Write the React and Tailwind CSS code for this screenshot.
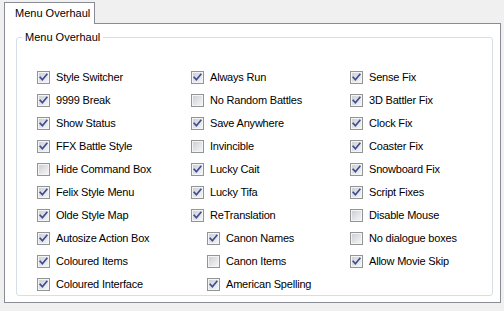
const COLUMNS = [
  {
    width: 'w-[154px]',
    items: [
      { label: 'Style Switcher', checked: true },
      { label: '9999 Break', checked: true },
      { label: 'Show Status', checked: true },
      { label: 'FFX Battle Style', checked: true },
      { label: 'Hide Command Box', checked: false },
      { label: 'Felix Style Menu', checked: true },
      { label: 'Olde Style Map', checked: true },
      { label: 'Autosize Action Box', checked: true },
      { label: 'Coloured Items', checked: true },
      { label: 'Coloured Interface', checked: true },
    ],
  },
  {
    width: 'w-[159px]',
    items: [
      { label: 'Always Run', checked: true },
      { label: 'No Random Battles', checked: false },
      { label: 'Save Anywhere', checked: true },
      { label: 'Invincible', checked: false },
      { label: 'Lucky Cait', checked: true },
      { label: 'Lucky Tifa', checked: true },
      { label: 'ReTranslation', checked: true },
      { label: 'Canon Names', checked: true, sub: true },
      { label: 'Canon Items', checked: false, sub: true },
      { label: 'American Spelling', checked: true, sub: true },
    ],
  },
  {
    width: 'flex-1',
    items: [
      { label: 'Sense Fix', checked: true },
      { label: '3D Battler Fix', checked: true },
      { label: 'Clock Fix', checked: true },
      { label: 'Coaster Fix', checked: true },
      { label: 'Snowboard Fix', checked: true },
      { label: 'Script Fixes', checked: true },
      { label: 'Disable Mouse', checked: false },
      { label: 'No dialogue boxes', checked: false },
      { label: 'Allow Movie Skip', checked: true },
    ],
  },
];

function CheckBox({ checked }) {
  return (
    <svg width="13" height="13" viewBox="0 0 13 13" className="shrink-0">
      <defs>
        <linearGradient id="cbfill" x1="0" y1="0" x2="1" y2="1">
          <stop offset="0" stopColor="#cdd0d5" />
          <stop offset="1" stopColor="#f4f4f5" />
        </linearGradient>
      </defs>
      <rect x="0.5" y="0.5" width="12" height="12" fill="#f4f4f4" stroke="#939494" />
      <rect x="2" y="2" width="9" height="9" fill="url(#cbfill)" />
      {checked && (
        <polyline
          points="3.2,6.4 5.4,8.8 9.8,3.4"
          fill="none"
          stroke="#404c92"
          strokeWidth="1.7"
          strokeLinecap="square"
        />
      )}
    </svg>
  );
}

function Option({ label, checked, sub }) {
  return (
    <div className={`flex h-[23px] items-center gap-[6px] pt-px ${sub ? 'pl-[16px]' : ''}`}>
      <CheckBox checked={checked} />
      <span className="whitespace-nowrap leading-[13px] tracking-[-0.2px]">{label}</span>
    </div>
  );
}

export default function App() {
  return (
    <div className="h-[311px] w-[504px] overflow-hidden bg-[#f0f0f0] pl-[4px] pt-[2px] font-['Liberation_Sans',Arial,sans-serif] text-[11px] text-black">
      {/* Tab header */}
      <div className="relative z-10 flex h-[22px] w-[91px] items-center border border-b-0 border-[#898c95] bg-white pl-[10px] pb-[1px]">
        Menu Overhaul
      </div>

      {/* Tab page */}
      <div className="-mt-px h-[280px] w-[497px] border border-[#898c95] bg-white">
        <div className="relative ml-[11px] mt-[13px] h-[259px] w-[477px] rounded-[3px] border border-[#d5dfe5]">
          <span className="absolute -top-[7px] left-[5px] bg-white px-[3px] leading-[13px]">Menu Overhaul</span>

          <div className="flex pl-[20px] pt-[27px]">
            {COLUMNS.map((col, i) => (
              <div key={i} className={`flex flex-col ${col.width}`}>
                {col.items.map((item) => (
                  <Option key={item.label} {...item} />
                ))}
              </div>
            ))}
          </div>
        </div>
      </div>
    </div>
  );
}
